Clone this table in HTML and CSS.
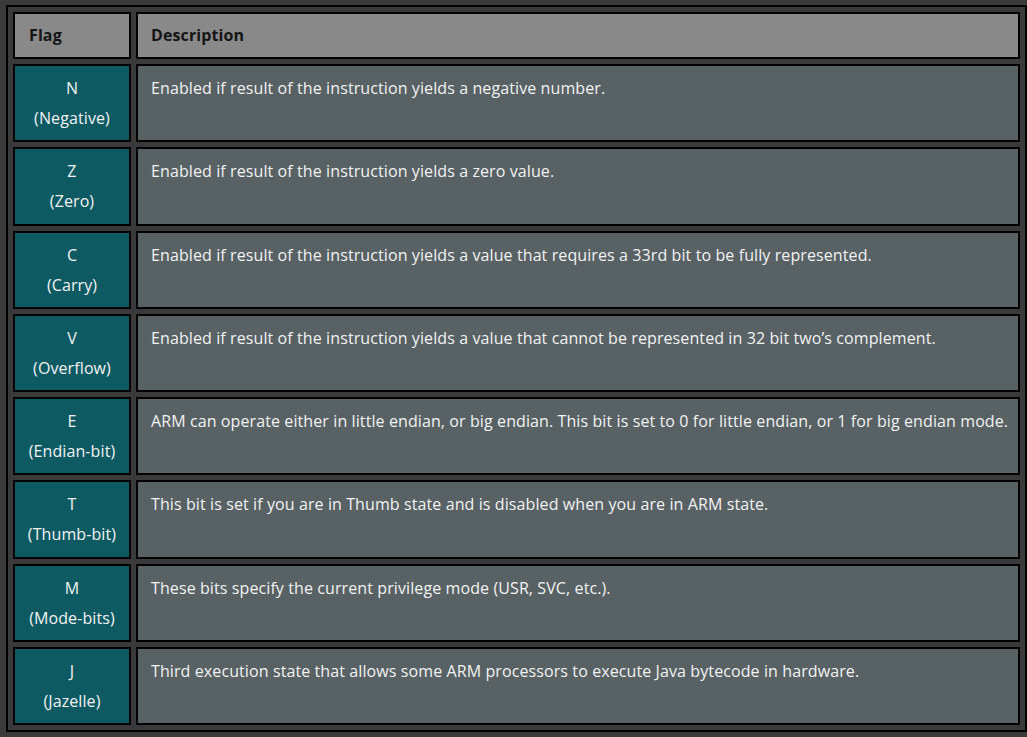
FILE: index.html
```html
<!DOCTYPE html>
<html lang="en">
<head>
<meta charset="utf-8">
<title>ARM CPSR flags</title>
<link rel="stylesheet" href="styles.css">
</head>
<body>
<table class="flags">
  <thead>
    <tr>
      <th class="col-flag">Flag</th>
      <th class="col-desc">Description</th>
    </tr>
  </thead>
  <tbody>
    <tr>
      <td class="flag">N<br>(Negative)</td>
      <td class="desc">Enabled if result of the instruction yields a negative number.</td>
    </tr>
    <tr>
      <td class="flag">Z<br>(Zero)</td>
      <td class="desc">Enabled if result of the instruction yields a zero value.</td>
    </tr>
    <tr>
      <td class="flag">C<br>(Carry)</td>
      <td class="desc">Enabled if result of the instruction yields a value that requires a 33rd bit to be fully represented.</td>
    </tr>
    <tr>
      <td class="flag">V<br>(Overflow)</td>
      <td class="desc">Enabled if result of the instruction yields a value that cannot be represented in 32 bit two’s complement.</td>
    </tr>
    <tr>
      <td class="flag">E<br>(Endian-bit)</td>
      <td class="desc">ARM can operate either in little endian, or big endian. This bit is set to 0 for little endian, or 1 for big endian mode.</td>
    </tr>
    <tr>
      <td class="flag">T<br>(Thumb-bit)</td>
      <td class="desc">This bit is set if you are in Thumb state and is disabled when you are in ARM state.</td>
    </tr>
    <tr>
      <td class="flag">M<br>(Mode-bits)</td>
      <td class="desc">These bits specify the current privilege mode (USR, SVC, etc.).</td>
    </tr>
    <tr>
      <td class="flag">J<br>(Jazelle)</td>
      <td class="desc">Third execution state that allows some ARM processors to execute Java bytecode in hardware.</td>
    </tr>
  </tbody>
</table>
</body>
</html>
```
FILE: styles.css
```css
html, body {
  margin: 0;
  padding: 0;
  background: #3a3a3a;
}

body {
  padding: 5px 0 0 6px;
  font-family: "Open Sans", "Noto Sans", sans-serif;
  font-size: 16px;
  letter-spacing: 0.1px;
  color: #f2f2f2;
}

.flags {
  width: 1021px;
  border: 2px solid #000;
  border-spacing: 5px;
  background: #3a3a3a;
}

.flags th,
.flags td {
  border: 2px solid #000;
  line-height: 30px;
  text-align: left;
  vertical-align: top;
}

.flags th {
  background: #898989;
  color: #151515;
  font-weight: 700;
  padding: 6px 14px 7px;
}

.flags th.col-desc {
  padding-left: 13px;
}

.col-flag {
  width: 86px;
}

.flags td {
  padding: 7px 13px 7.3px;
}

.flags td.flag {
  background: #0e5a63;
  text-align: center;
  padding-left: 4px;
  padding-right: 4px;
}

.flags td.desc {
  background: #586164;
  padding-right: 4px;
}
```
